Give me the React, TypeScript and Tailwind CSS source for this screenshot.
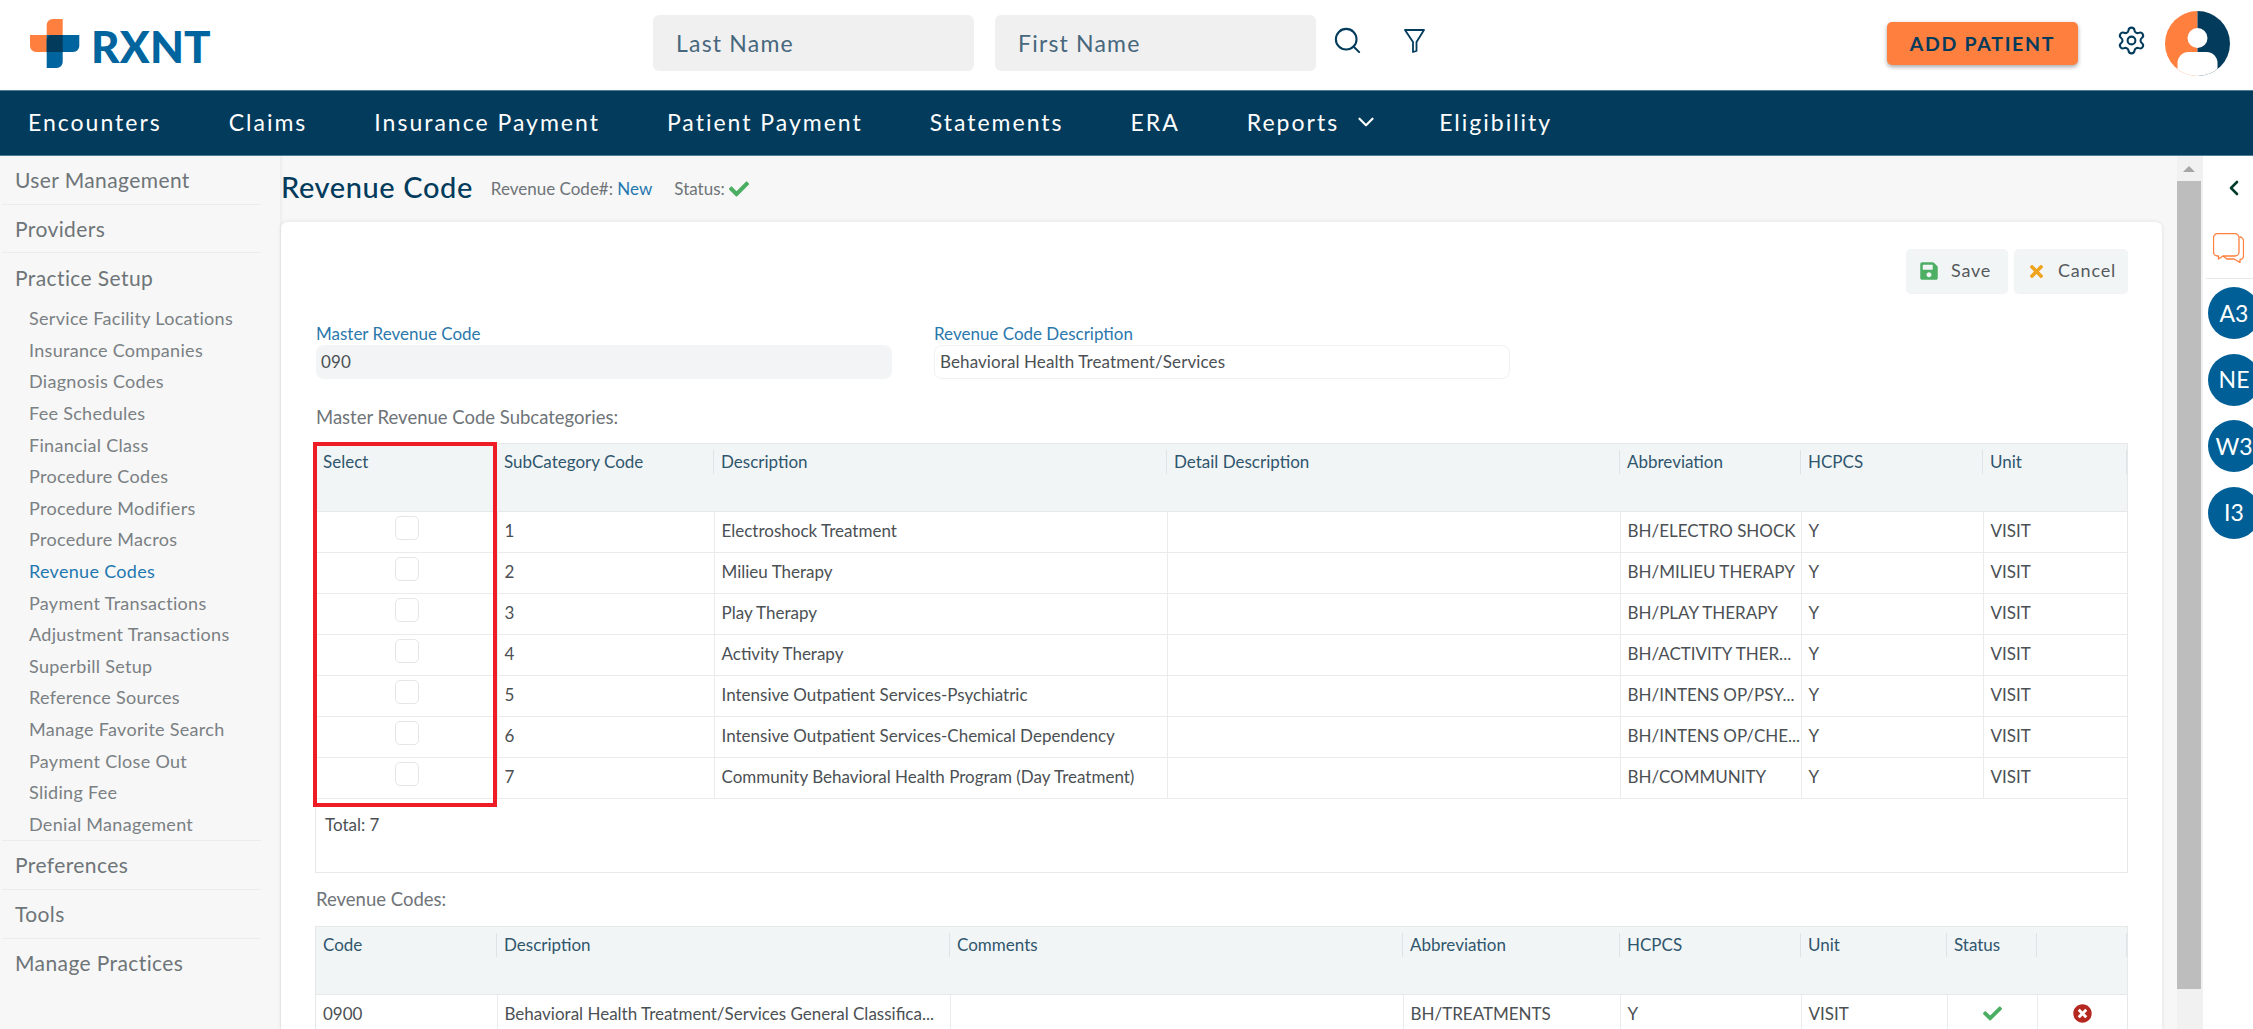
import { ChevronDown, ChevronLeft, Search, Settings } from "lucide-react";
import { FaCheck, FaSave, FaTimes, FaTimesCircle } from "react-icons/fa";

const navItems = ["Encounters", "Claims", "Insurance Payment", "Patient Payment", "Statements", "ERA", "Reports", "Eligibility"];

const setupItems = [
  "Service Facility Locations",
  "Insurance Companies",
  "Diagnosis Codes",
  "Fee Schedules",
  "Financial Class",
  "Procedure Codes",
  "Procedure Modifiers",
  "Procedure Macros",
  "Revenue Codes",
  "Payment Transactions",
  "Adjustment Transactions",
  "Superbill Setup",
  "Reference Sources",
  "Manage Favorite Search",
  "Payment Close Out",
  "Sliding Fee",
  "Denial Management",
];

const subcategories = [
  ["1", "Electroshock Treatment", "BH/ELECTRO SHOCK"],
  ["2", "Milieu Therapy", "BH/MILIEU THERAPY"],
  ["3", "Play Therapy", "BH/PLAY THERAPY"],
  ["4", "Activity Therapy", "BH/ACTIVITY THER..."],
  ["5", "Intensive Outpatient Services-Psychiatric", "BH/INTENS OP/PSY..."],
  ["6", "Intensive Outpatient Services-Chemical Dependency", "BH/INTENS OP/CHE..."],
  ["7", "Community Behavioral Health Program (Day Treatment)", "BH/COMMUNITY"],
];

function Logo() {
  return (
    <div className="flex items-center">
      <svg width="50" height="50" viewBox="0 0 50 50">
        <path d="M16.7 6a6 6 0 0 1 6-6H32.7V33H6a6 6 0 0 1-6-6V16H16.7z" fill="#ff7f3f" />
        <path d="M16.7 16H49.3V27a6 6 0 0 1-6 6H32.7V43a6 6 0 0 1-6 6H16.7z" fill="#00659e" />
        <path d="M22 16H32.7V33H16.7V21a5 5 0 0 1 5-5z" fill="#033b5c" />
      </svg>
      <span className="ml-[11px] mt-[4px] text-[44px] leading-none font-black tracking-[0.2px] text-[#00659e]">RXNT</span>
    </div>
  );
}

function Avatar() {
  return (
    <svg width="65" height="65" viewBox="0 0 65 65">
      <clipPath id="avatar-clip">
        <circle cx="32.5" cy="32.5" r="32.5" />
      </clipPath>
      <g clipPath="url(#avatar-clip)">
        <rect x="0" y="0" width="32.5" height="65" fill="#ff7f3f" />
        <rect x="32.5" y="0" width="32.5" height="65" fill="#033b5c" />
        <circle cx="32.5" cy="27" r="10" fill="#fff" />
        <rect x="12.5" y="41" width="40" height="30" rx="11" fill="#fff" />
      </g>
    </svg>
  );
}

function Header() {
  return (
    <header className="flex h-[90px] items-start bg-white">
      <div className="ml-[30px] mt-[19px] w-[623px]">
        <Logo />
      </div>
      <div className="mt-[15px] flex h-[56px] w-[321px] items-center rounded-md bg-[#f0f0f0] pl-[23px] text-[23px] tracking-[1.2px] text-[#47677d]">Last Name</div>
      <div className="ml-[21px] mt-[15px] flex h-[56px] w-[321px] items-center rounded-md bg-[#f0f0f0] pl-[23px] text-[23px] tracking-[1.2px] text-[#47677d]">First Name</div>
      <Search className="ml-[16px] mt-[25px] text-[#033b5c]" size={31} strokeWidth={1.6} />
      <svg className="ml-[41px] mt-[29px] text-[#033b5c]" width="21" height="24" viewBox="0 0 21 24" fill="none" stroke="currentColor" strokeWidth="1.8" strokeLinejoin="round">
        <path d="M1 1H20L12.5 13V22L9 23V13Z" />
      </svg>
      <button className="ml-[462px] mt-[22px] h-[43px] w-[191px] rounded-[5px] bg-[#ff7f3f] text-[19.5px] font-bold tracking-[1.7px] text-[#033b5c] shadow-[0_2px_4px_rgba(0,0,0,0.35)]">ADD PATIENT</button>
      <Settings className="ml-[38px] mt-[25px] text-[#033b5c]" size={31} strokeWidth={1.6} />
      <div className="ml-[18px] mt-[11px]">
        <Avatar />
      </div>
    </header>
  );
}

function NavBar() {
  return (
    <nav className="flex h-[66px] items-center gap-[67px] border-y border-[#4f7d98] bg-[#033b5c] pb-[2px] pl-[28px] text-[23px] tracking-[2px] text-white">
      {navItems.map((item) => (
        <span key={item} className="flex items-center">
          {item}
          {item === "Reports" && <ChevronDown className="-mr-[7px] ml-[14px] text-white" size={26} strokeWidth={2} />}
        </span>
      ))}
    </nav>
  );
}

function SideItem({ label, className }: { label: string; className: string }) {
  return <div className={`mx-[2px] flex w-[259px] items-center pl-[13px] text-[21px] tracking-[0.4px] text-[#6e7578] ${className}`}>{label}</div>;
}

function Sidebar() {
  return (
    <aside className="w-[281px] shrink-0 border-r border-[#eeeeee] shadow-[1px_0_3px_rgba(0,0,0,0.04)]">
      <SideItem label="User Management" className="h-[49px] border-b border-[#ececec]" />
      <SideItem label="Providers" className="h-[48px] border-b border-[#ececec]" />
      <SideItem label="Practice Setup" className="h-[50px]" />
      <div className="mx-[2px] w-[259px] border-b border-[#ececec]">
        {setupItems.map((item) => (
          <div
            key={item}
            className={`flex h-[31.6px] items-center pl-[27px] text-[18px] tracking-[0.3px] ${item === "Revenue Codes" ? "text-[#1f77b0]" : "text-[#7a8083]"}`}
          >
            {item}
          </div>
        ))}
      </div>
      <SideItem label="Preferences" className="h-[49px] border-b border-[#ececec]" />
      <SideItem label="Tools" className="h-[49px] border-b border-[#ececec]" />
      <SideItem label="Manage Practices" className="h-[47px]" />
    </aside>
  );
}

function HeadCell({ label, last }: { label: string; last?: boolean }) {
  return (
    <th className="h-[67px] p-0 align-top font-normal">
      <div className={`mt-[6px] flex h-[24px] items-center pl-[7px] text-left ${last ? "" : "border-r border-[#dfe3e5]"}`}>{label}</div>
    </th>
  );
}

function Cell({ children, center }: { children?: React.ReactNode; center?: boolean }) {
  return (
    <td className={`h-[41px] overflow-hidden whitespace-nowrap border-b border-l border-[#e9ebec] p-0 pb-[2px] first:border-l-0 ${center ? "text-center" : "pl-[7px]"}`}>
      {children}
    </td>
  );
}

function SubcategoryTable() {
  return (
    <div className="relative mt-[15px] h-[430px] border border-[#e6e8e9]">
      <table className="w-full table-fixed border-collapse text-[17px] text-[#4b5054]">
        <colgroup>
          <col className="w-[181px]" />
          <col className="w-[217px]" />
          <col className="w-[453px]" />
          <col className="w-[453px]" />
          <col className="w-[181px]" />
          <col className="w-[182px]" />
          <col />
        </colgroup>
        <thead>
          <tr className="border-b border-[#e6e8e9] bg-[#f2f5f6] text-[#2f566d]">
            {["Select", "SubCategory Code", "Description", "Detail Description", "Abbreviation", "HCPCS"].map((h) => (
              <HeadCell key={h} label={h} />
            ))}
            <HeadCell label="Unit" />
          </tr>
        </thead>
        <tbody>
          {subcategories.map(([code, desc, abbr]) => (
            <tr key={code}>
              <Cell>
                <div className="-mt-[5px] ml-[72px] h-[24px] w-[24px] rounded-[5px] border border-[#e4e6e7]" />
              </Cell>
              <Cell>{code}</Cell>
              <Cell>{desc}</Cell>
              <Cell />
              <Cell>{abbr}</Cell>
              <Cell>Y</Cell>
              <Cell>VISIT</Cell>
            </tr>
          ))}
        </tbody>
      </table>
      <div className="pl-[9px] pt-[15px] text-[17px] leading-[22px] text-[#4b5054]">Total: 7</div>
      <div className="absolute -left-[3px] -top-[2px] h-[365px] w-[184px] border-4 border-[#ee1c25]" />
    </div>
  );
}

function RevenueTable() {
  return (
    <div className="mt-[16px] border border-[#e6e8e9]">
      <table className="w-full table-fixed border-collapse text-[17px] text-[#4b5054]">
        <colgroup>
          <col className="w-[181px]" />
          <col className="w-[453px]" />
          <col className="w-[453px]" />
          <col className="w-[217px]" />
          <col className="w-[181px]" />
          <col className="w-[146px]" />
          <col className="w-[90px]" />
          <col />
        </colgroup>
        <thead>
          <tr className="border-b border-[#e6e8e9] bg-[#f2f5f6] text-[#2f566d]">
            {["Code", "Description", "Comments", "Abbreviation", "HCPCS", "Unit", "Status", ""].map((h, i) => (
              <HeadCell key={i} label={h} />
            ))}
          </tr>
        </thead>
        <tbody>
          <tr>
            <Cell>0900</Cell>
            <Cell>Behavioral Health Treatment/Services General Classifica...</Cell>
            <Cell />
            <Cell>BH/TREATMENTS</Cell>
            <Cell>Y</Cell>
            <Cell>VISIT</Cell>
            <Cell center>
              <FaCheck className="mx-auto text-[#4cae62]" size={19} />
            </Cell>
            <Cell center>
              <FaTimesCircle className="mx-auto text-[#b5281f]" size={19} />
            </Cell>
          </tr>
        </tbody>
      </table>
    </div>
  );
}

function Card() {
  return (
    <section className="mr-[15px] flex-1 overflow-hidden rounded-t-md bg-white px-[34px] pt-[27px] shadow-[0_0_4px_rgba(0,0,0,0.1)]">
      <div className="flex justify-end gap-[6px]">
        <button className="flex h-[44px] w-[102px] items-center rounded-[5px] bg-[#f2f5f6] pb-[2px] pl-[13px] text-[18px] tracking-[0.8px] text-[#55595c] shadow-[0_1px_1px_rgba(0,0,0,0.06)]">
          <FaSave className="mr-[12px] mt-[2px] text-[#4caf64]" size={20} />
          Save
        </button>
        <button className="flex h-[44px] w-[114px] items-center rounded-[5px] bg-[#f2f5f6] pb-[2px] pl-[13px] text-[18px] tracking-[0.8px] text-[#55595c] shadow-[0_1px_1px_rgba(0,0,0,0.06)]">
          <FaTimes className="mr-[12px] mt-[2px] text-[#f0a31c]" size={19} />
          Cancel
        </button>
      </div>

      <div className="mt-[30px] flex gap-[42px] pl-[1px]">
        <div className="w-[576px]">
          <div className="h-[22px] text-[17px] leading-[22px] text-[#2b78ac]">Master Revenue Code</div>
          <div className="flex h-[34px] items-center rounded-lg bg-[#f2f4f5] pl-[5px] text-[17px] tracking-[0.1px] text-[#4b5054]">090</div>
        </div>
        <div className="w-[576px]">
          <div className="h-[22px] text-[17px] leading-[22px] text-[#2b78ac]">Revenue Code Description</div>
          <div className="flex h-[34px] items-center rounded-lg border border-[#f0f1f2] pl-[5px] text-[17px] tracking-[0.1px] text-[#4b5054]">Behavioral Health Treatment/Services</div>
        </div>
      </div>

      <div className="mt-[27px] h-[22px] pl-[1px] text-[18.5px] leading-[22px] text-[#6f7478]">Master Revenue Code Subcategories:</div>
      <SubcategoryTable />

      <div className="mt-[15px] h-[22px] pl-[1px] text-[18.5px] leading-[22px] text-[#6f7478]">Revenue Codes:</div>
      <RevenueTable />
    </section>
  );
}

function ScrollBar() {
  return (
    <div className="flex w-[26px] shrink-0 flex-col bg-[#f1f1f1] pr-[2px]">
      <div className="flex h-[25px] items-center justify-center">
        <div className="h-0 w-0 border-x-[6px] border-b-[6px] border-x-transparent border-b-[#a6a6a6]" />
      </div>
      <div className="h-[808px] bg-[#bdbdbd]" />
    </div>
  );
}

function RightPanel() {
  return (
    <aside className="w-[50px] shrink-0 overflow-hidden bg-white">
      <div className="ml-[3px] flex h-[123px] flex-col items-start border-b border-[#e8e8e8]">
        <ChevronLeft className="ml-[16px] mt-[20px] text-[#033b2c]" size={24} strokeWidth={2.6} />
        <svg className="ml-[7px] mt-[33px] text-[#ff7f3f]" width="31" height="30" viewBox="0 0 31 30" fill="none" stroke="currentColor" strokeWidth="1.3" strokeLinejoin="round">
          <path d="M4.5.7H22a4 4 0 0 1 4 4V19a4 4 0 0 1-4 4H10L5.5 26V23H4.5a4 4 0 0 1-4-4V4.7a4 4 0 0 1 4-4Z" />
          <path d="M26.5 4a4 4 0 0 1 4 4V23a3.5 3.5 0 0 1-3.5 3.5V29.5L21 26H14L10 23" />
        </svg>
      </div>
      <div className="ml-[5px] mt-[8px] flex w-[52px] flex-col gap-[14.5px]">
        {["A3", "NE", "W3", "I3"].map((label) => (
          <div key={label} className="flex h-[52px] w-[52px] items-center justify-center rounded-full bg-[#005f96] text-[23px] text-white">
            {label}
          </div>
        ))}
      </div>
    </aside>
  );
}

export default function App() {
  return (
    <div className="flex h-screen flex-col overflow-hidden bg-[#f7f7f7] font-['Lato',sans-serif]">
      <Header />
      <NavBar />
      <div className="flex min-h-0 flex-1">
        <Sidebar />
        <main className="flex min-w-0 flex-1 flex-col">
          <div className="flex h-[66px] shrink-0 items-center pb-[4px]">
            <h1 className="text-[29px] font-medium tracking-[0.6px] text-[#033b5c]">Revenue Code</h1>
            <span className="ml-[18px] mt-[3px] text-[17px] text-[#6f7478]">
              Revenue Code#: <span className="text-[#1f77b0]">New</span>
            </span>
            <span className="ml-[22px] mt-[3px] flex items-center text-[17px] text-[#6f7478]">
              Status:
              <FaCheck className="ml-[4px] text-[#4cae62]" size={20} />
            </span>
          </div>
          <Card />
        </main>
        <ScrollBar />
        <RightPanel />
      </div>
    </div>
  );
}
